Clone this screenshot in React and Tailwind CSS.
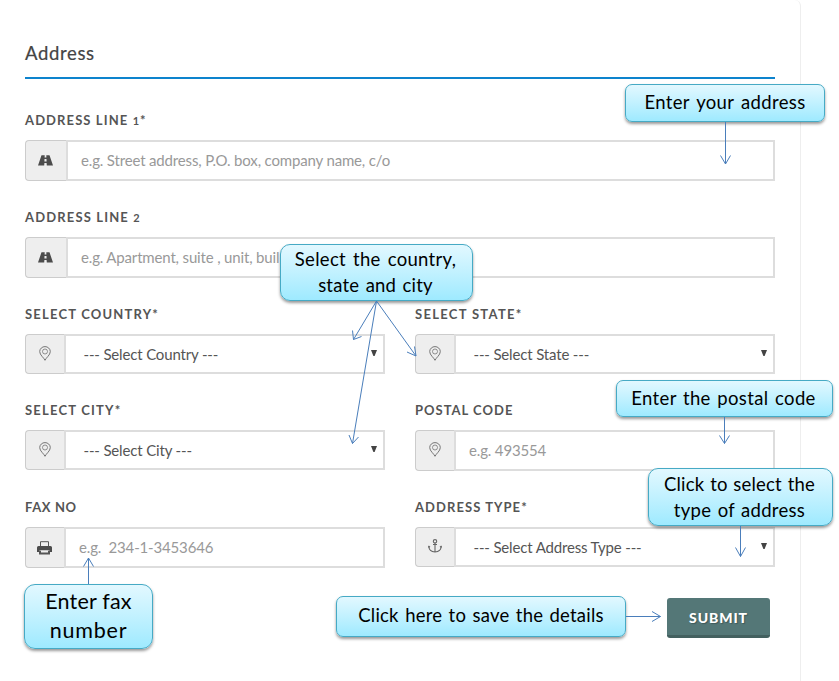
const labelCls = "flex h-5 items-center whitespace-nowrap font-['Lato',sans-serif] text-[13px] font-bold text-[#555]";

function Road() {
  return (
    <svg width="15" height="11" viewBox="0 0 15 11" fill="#4c4c4c" className="-mt-px -ml-0.5">
      <path d="M3.500 0.300H6.700L6.600 2.500H8.400L8.300 0.300H11.500L15 10.500H8.800L8.600 8H6.400L6.200 10.500H0ZM6.500 3.900 6.400 6.400H8.600L8.500 3.900Z" fillRule="evenodd" />
    </svg>
  );
}
function Pin() {
  return (
    <svg width="12" height="15" viewBox="0 0 12 15" fill="none" stroke="#777" className="-mt-[2px] -ml-px">
      <path d="M6 14.300C5 11.800 .7 9 .7 5.600a5.300 5 0 0 1 10.600 0C11.300 9 7 11.800 6 14.300Z" />
      <circle cx="6" cy="5.500" r="2.500" strokeWidth="0.8" />
    </svg>
  );
}
function Printer() {
  return (
    <svg width="15" height="14" viewBox="0 0 15 14" className="-ml-0.5">
      <path d="M3.500 6V.7H11.500V6" fill="none" stroke="#555" />
      <path d="M1.500 5H13.500Q15 5 15 6.500V11H12.500V9H2.500V11H0V6.500Q0 5 1.500 5Z" fill="#4c4c4c" />
      <path d="M2 9.500H13V13.500H2Z" fill="#555" />
      <path d="M4 9.500H11V11.500H4Z" fill="#eee" />
    </svg>
  );
}
function AnchorIcon() {
  return (
    <svg width="14" height="14" viewBox="0 0 14 14" fill="none" stroke="#666" strokeWidth="1.1" className="-mt-[2px] -ml-px">
      <circle cx="7" cy="2.300" r="1.700" />
      <path d="M7 4V13M5 5.500H9M.9 7.500C1 11 3.500 12.800 7 13C10.500 12.800 13 11 13.100 7.500M0 8.300 .9 7.200 2 8.200M14 8.300 13.100 7.200 12 8.200" />
    </svg>
  );
}

function Field({ icon, text, h, wide, select }) {
  return (
    <div className={`flex ${h}`}>
      <div className={`flex shrink-0 items-center justify-center rounded-l border border-r-0 border-[#ccc] bg-[#eee] ${wide ? "w-[41px]" : "w-[39px]"}`}>{icon}</div>
      <div className={`flex min-w-0 flex-1 items-center border-2 border-[#ddd] bg-white font-['Lato',sans-serif] text-[15px] tracking-[-0.16px] whitespace-pre ${select ? "pl-[17.500px] pr-1.5 text-[#555]" : "pl-[13px] text-[#999]"}`}>
        <span>{text}</span>
        {select && (
          <svg width="6" height="6" viewBox="0 0 6 6" className="ml-auto -mt-[2px]"><path d="M0 0H6L3.600 6H2.400Z" fill="#444" /></svg>
        )}
      </div>
    </div>
  );
}

function Callout({ className, children }) {
  return (
    <div className={`absolute flex flex-col items-center justify-center border border-[#46aac5] bg-linear-to-b from-[#e2f8ff] to-[#9eeaff] text-center font-['Lato',sans-serif] whitespace-nowrap text-black shadow-[0_2px_3px_rgba(0,0,0,0.4)] ${className}`}>
      {children}
    </div>
  );
}

export default function App() {
  return (
    <div className="relative h-[681px] w-[839px] overflow-hidden bg-white">
      <div className="h-full w-[801px] rounded-t-md border-r border-[#eee] pl-[25px]">
        <div className="w-[750px] pt-[39px]">
          <h2 className="h-10 border-b-2 border-[#0d83cd] font-['Lato',sans-serif] text-[18.500px] leading-7 tracking-[0.65px] text-[#444] [-webkit-text-stroke:0.2px_#444]"><span>Address</span></h2>
          <div className="pt-8">
            <label className={labelCls}><span className="tracking-[1.1px]">ADDRESS LINE <span className="text-[11px]">1</span>*</span></label>
            <div className="pt-[9px]"><Field h="h-[41px]" wide icon={<Road />} text="e.g. Street address, P.O. box, company name, c/o" /></div>
          </div>
          <div className="pt-[27px]">
            <label className={labelCls}><span className="tracking-[1.15px]">ADDRESS LINE <span className="text-[11px]">2</span></span></label>
            <div className="pt-[9px]"><Field h="h-[41px]" wide icon={<Road />} text="e.g. Apartment, suite , unit, buil" /></div>
          </div>
          <div className="grid grid-cols-2 gap-x-[30px]">
            <div className="h-[96px] pt-[27px]">
              <label className={labelCls}><span className="tracking-[1.2px]">SELECT COUNTRY*</span></label>
              <div className="pt-[9px]"><Field h="h-10" select icon={<Pin />} text="--- Select Country ---" /></div>
            </div>
            <div className="h-[96px] pt-[27px]">
              <label className={labelCls}><span className="tracking-[1.3px]">SELECT STATE*</span></label>
              <div className="pt-[9px]"><Field h="h-10" select icon={<Pin />} text="--- Select State ---" /></div>
            </div>
            <div className="h-[97px] pt-[27px]">
              <label className={labelCls}><span className="tracking-[1.2px]">SELECT CITY*</span></label>
              <div className="pt-[9px]"><Field h="h-10" select icon={<Pin />} text="--- Select City ---" /></div>
            </div>
            <div className="h-[97px] pt-[27px]">
              <label className={labelCls}><span className="tracking-[1px]">POSTAL CODE</span></label>
              <div className="pt-[9px]"><Field h="h-[41px]" icon={<Pin />} text="e.g. 493554" /></div>
            </div>
            <div className="pt-[27px]">
              <label className={labelCls}><span className="tracking-[0.6px]">FAX NO</span></label>
              <div className="pt-[9px]"><Field h="h-[41px]" icon={<Printer />} text="e.g.  234-1-3453646" /></div>
            </div>
            <div className="pt-[27px]">
              <label className={labelCls}><span className="tracking-[1.06px]">ADDRESS TYPE*</span></label>
              <div className="pt-[9px]"><Field h="h-10" select icon={<AnchorIcon />} text="--- Select Address Type ---" /></div>
            </div>
          </div>
          <div className="flex justify-end pt-[30px] pr-[5px]">
            <button className="h-10 w-[103px] rounded-[3px] border-b-[3px] border-[#43605f] bg-[#547777] font-['Lato',sans-serif] text-[14px] font-black tracking-[0.9px] text-white [text-shadow:1px_1px_1px_rgba(0,0,0,0.25)]"><span className="relative top-px">SUBMIT</span></button>
          </div>
        </div>
      </div>

      <Callout className="left-[625px] top-[84px] h-[38px] w-[200px] rounded-[7px] pb-[2px] text-[18.500px] leading-6"><span className="tracking-[0.35px] [word-spacing:2px]">Enter your address</span></Callout>
      <Callout className="left-[280px] top-[244px] h-[57px] w-[193px] rounded-[10px] pr-0.5 pb-[2px] text-[18.500px] leading-[26px]"><span className="tracking-[0.3px] [word-spacing:2px]">Select the country,</span><span className="tracking-[0.2px] [word-spacing:1.500px]">state and city</span></Callout>
      <Callout className="left-[616px] top-[380px] h-[37px] w-[217px] rounded-[7px] pr-0.5 pb-[2px] text-[18.500px] leading-6"><span className="tracking-[0.35px] [word-spacing:1.500px]">Enter the postal code</span></Callout>
      <Callout className="left-[648px] top-[468px] h-[58px] w-[185px] rounded-[10px] pr-0.5 text-[18.500px] leading-[26px]"><span className="tracking-[0.2px] [word-spacing:0.800px]">Click to select the</span><span className="tracking-[0.3px] [word-spacing:1.300px]">type of address</span></Callout>
      <Callout className="left-[24px] top-[584px] h-[65px] w-[129px] rounded-[11px] pb-[2px] text-[21.500px] leading-[29px]"><span className="tracking-[0.2px]">Enter fax</span><span className="tracking-[0.8px]">number</span></Callout>
      <Callout className="left-[336px] top-[596px] h-[41px] w-[290px] rounded-[7px] pb-[4px] text-[18.500px] leading-6"><span className="tracking-[0.2px] [word-spacing:1.500px]">Click here to save the details</span></Callout>

      <svg className="pointer-events-none absolute inset-0" width="839" height="681" fill="none" stroke="#4a7ebb">
        <path d="M725.500 122V164M720.500 155.500 725.500 164 730.500 155.500" />
        <path d="M376.500 301 353.500 339.500M352.500 330.500 353.500 339.500 361.500 336.500" />
        <path d="M376.500 301 416 356M407 352 416 356 414.500 346.500" />
        <path d="M376.500 301 352.500 443.500M349 435 352.500 443.500 358.500 437" />
        <path d="M724.500 417V443.500M719.500 435.500 724.500 443.500 729.500 435.500" />
        <path d="M740.500 526V556.500M735.500 547.500 740.500 556.500 745.500 547.500" />
        <path d="M88.500 584V558M83.500 566.500 88.500 558 93.500 566.500" />
        <path d="M626 616.500H660.500M652 611.500 660.500 616.500 652 621.500" />
      </svg>
    </div>
  );
}
